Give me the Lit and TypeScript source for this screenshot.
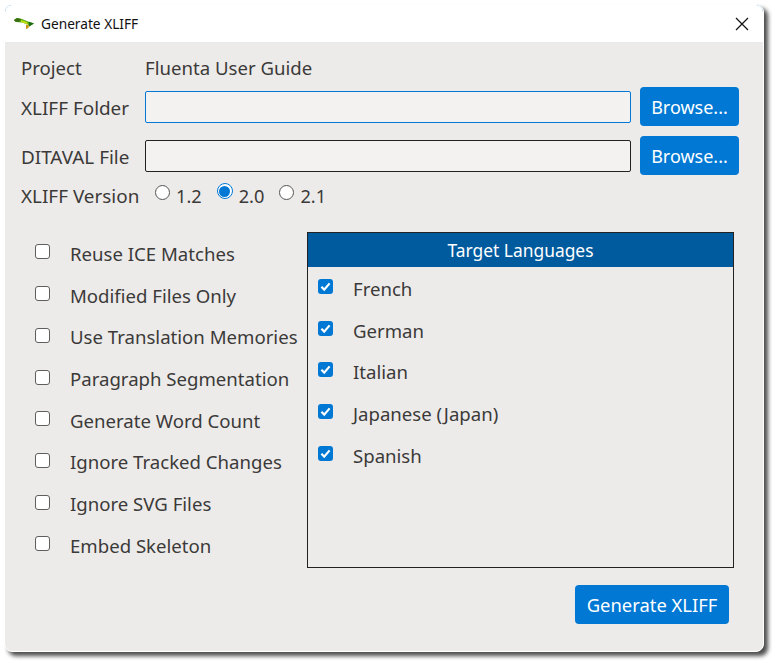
import { LitElement, html, css, svg } from 'lit';
import { customElement } from 'lit/decorators.js';

const OPTIONS = [
  'Reuse ICE Matches',
  'Modified Files Only',
  'Use Translation Memories',
  'Paragraph Segmentation',
  'Generate Word Count',
  'Ignore Tracked Changes',
  'Ignore SVG Files',
  'Embed Skeleton',
];

const LANGUAGES = ['French', 'German', 'Italian', 'Japanese (Japan)', 'Spanish'];

const check = svg`<svg viewBox="0 0 15 15" width="15" height="15"><path d="M3.4 7.8l2.8 2.8 5.4-6.2" fill="none" stroke="#fff" stroke-width="2.2"/></svg>`;

@customElement('app-root')
export class AppRoot extends LitElement {
  static styles = css`
    :host {
      display: block;
      width: 776px;
      height: 663px;
      padding: 4px 0 0 4px;
      box-sizing: border-box;
      background: #fff;
      font-family: 'Noto Sans', 'Open Sans', sans-serif;
      font-size: 18.6px;
      color: #3b3a39;
    }

    .window {
      position: relative;
      width: 760px;
      height: 648px;
      box-sizing: border-box;
      border: 1px solid #fff;
      border-radius: 8px;
      overflow: hidden;
      background: #edebe9;
      box-shadow: 4px 4px 4px rgba(0, 0, 0, 0.7);
      display: flex;
      flex-direction: column;
    }

    .corner {
      position: absolute;
      top: -1px;
      width: 8px;
      height: 8px;
      box-sizing: border-box;
      border-top: 1px solid #4a9bd0;
    }

    .corner.left {
      left: -1px;
      border-left: 1px solid #4a9bd0;
      border-top-left-radius: 8px;
    }

    .corner.right {
      right: -1px;
      border-right: 1px solid #4a9bd0;
      border-top-right-radius: 8px;
    }

    .titlebar {
      height: 37px;
      flex: none;
      background: #fff;
      display: flex;
      align-items: center;
      padding: 0 14px 0 9px;
      font-size: 13.7px;
      color: #111;
    }

    .titlebar .logo {
      margin-right: 7px;
    }

    .titlebar .close {
      margin-left: auto;
    }

    .content {
      flex: 1;
      padding: 10px 24px 0 16px;
      display: flex;
      flex-direction: column;
    }

    .row {
      display: flex;
      align-items: center;
    }

    .row .label {
      width: 124px;
      flex: none;
      font-size: 18.9px;
      white-space: nowrap;
    }

    .project {
      height: 30px;
      margin-bottom: 5px;
    }

    .project .label {
      font-size: 18.6px;
    }

    .file-row {
      height: 39px;
      margin-bottom: 10px;
    }

    .file-row .label {
      padding-top: 2px;
    }

    .input {
      width: 486px;
      height: 32px;
      box-sizing: border-box;
      background: #f3f2f1;
      border: 1px solid #222;
      border-radius: 2px;
      margin-right: 9px;
    }

    .input.focus {
      border-color: #0078d4;
    }

    .btn {
      height: 39px;
      border: none;
      border-radius: 4px;
      background: #0078d4;
      color: #fff;
      font: inherit;
      padding: 0;
    }

    .btn.browse {
      width: 99px;
      font-size: 18px;
    }

    .btn.generate {
      width: 154px;
      font-size: 18.4px;
    }

    .version {
      height: 30px;
      margin-top: -4px;
    }

    .version .label {
      width: 134px;
    }

    .radio {
      display: flex;
      align-items: center;
      margin-right: 15px;
      font-size: 18.2px;
    }

    .radio .dot {
      width: 15px;
      height: 15px;
      box-sizing: border-box;
      border: 1px solid #555;
      border-radius: 50%;
      background: #fff;
      margin: -7px 6px 0 0;
    }

    .radio .dot.on {
      width: 16px;
      height: 16px;
      background: #fff;
      border: 1.5px solid #0078d4;
      margin-top: -10px;
      position: relative;
    }

    .radio .dot.on::after {
      content: '';
      position: absolute;
      inset: 1.5px;
      border-radius: 50%;
      background: #0078d4;
    }

    .main {
      display: flex;
      margin-top: 21px;
    }

    .options {
      width: 286px;
      flex: none;
      padding: 0.6px 0 0 14px;
      box-sizing: border-box;
      display: flex;
      flex-direction: column;
    }

    .option {
      height: 41.7px;
      display: flex;
      align-items: center;
      white-space: nowrap;
    }

    .box {
      width: 15px;
      height: 15px;
      box-sizing: border-box;
      border: 1px solid #605e5c;
      border-radius: 3px;
      background: #fff;
      flex: none;
      margin: -3px 20px 0 0;
    }

    .box.on {
      border: none;
      background: #0078d4;
      margin-top: -4px;
    }

    .box svg {
      display: block;
    }

    .panel {
      width: 427px;
      height: 336px;
      box-sizing: border-box;
      border: 1px solid #222;
      display: flex;
      flex-direction: column;
    }

    .panel .head {
      height: 34px;
      flex: none;
      background: #005a9e;
      color: #fff;
      font-size: 17.4px;
      display: flex;
      align-items: center;
      justify-content: center;
    }

    .panel .list {
      padding: 1px 10px;
    }

    .panel .option {
      height: 41.6px;
    }

    .footer {
      display: flex;
      justify-content: flex-end;
      padding: 17px 10px 0 0;
    }
  `;

  render() {
    return html`
      <div class="window">
        <span class="corner left"></span>
        <span class="corner right"></span>
        <div class="titlebar">
          <svg class="logo" width="20" height="11" viewBox="0 0 20 11">
            <path d="M0 2L3 0l5 1 6 2.5 6 2-5 3-1-2-6-2-6-.5z" fill="#4fa50f" />
            <path d="M0 2L3 0l4 1-2 3-4-.5z" fill="#3b6e14" />
            <path d="M7 2l6 2 1 2.5-7-2.5z" fill="#c4e012" />
            <path d="M15 3.7l5 1.8-5 3z" fill="#1f6b18" />
            <path d="M12 6.5l3 1-.5 2.5-2.5 1z" fill="#c79410" />
          </svg>
          <span>Generate XLIFF</span>
          <svg class="close" width="14" height="14" viewBox="0 0 14 14">
            <path d="M1 1l12 12M13 1L1 13" stroke="#111" stroke-width="1.2" fill="none" />
          </svg>
        </div>
        <div class="content">
          <div class="row project">
            <span class="label">Project</span><span>Fluenta User Guide</span>
          </div>
          <div class="row file-row">
            <span class="label">XLIFF Folder</span>
            <div class="input focus"></div>
            <button class="btn browse">Browse...</button>
          </div>
          <div class="row file-row">
            <span class="label">DITAVAL File</span>
            <div class="input"></div>
            <button class="btn browse">Browse...</button>
          </div>
          <div class="row version">
            <span class="label">XLIFF Version</span>
            <span class="radio"><span class="dot"></span>1.2</span>
            <span class="radio"><span class="dot on"></span>2.0</span>
            <span class="radio"><span class="dot"></span>2.1</span>
          </div>
          <div class="main">
            <div class="options">
              ${OPTIONS.map(
                (o) => html`<div class="option"><span class="box"></span>${o}</div>`
              )}
            </div>
            <div class="panel">
              <div class="head">Target Languages</div>
              <div class="list">
                ${LANGUAGES.map(
                  (l) => html`<div class="option"><span class="box on">${check}</span>${l}</div>`
                )}
              </div>
            </div>
          </div>
          <div class="footer">
            <button class="btn generate">Generate XLIFF</button>
          </div>
        </div>
      </div>
    `;
  }
}
